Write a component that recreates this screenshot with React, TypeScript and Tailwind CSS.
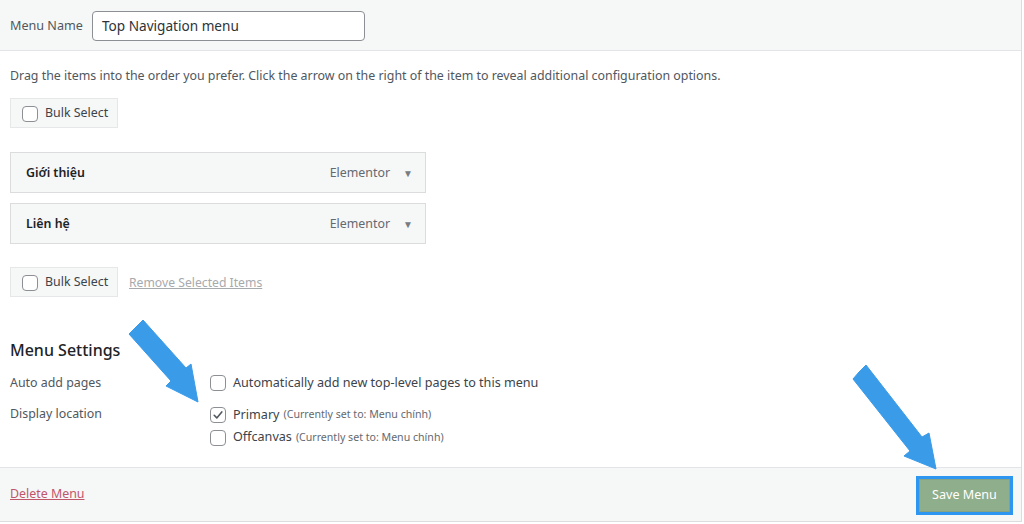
import React from "react";

const Checkbox = ({ checked = false }: { checked?: boolean }) => (
  <span className="flex h-4 w-4 shrink-0 items-center justify-center rounded-[4px] border border-[#8c8f94] bg-white">
    {checked && (
      <svg width="12" height="12" viewBox="0 0 12 12" fill="none">
        <path d="M2.2 6.3 L4.8 8.9 L9.8 2.9" stroke="#50575e" strokeWidth="1.6" strokeLinecap="round" strokeLinejoin="round" />
      </svg>
    )}
  </span>
);

const BulkSelect = () => (
  <div className="flex h-[30px] w-[108px] items-center gap-[7px] border border-[#e6e7e8] bg-[#f6f7f7] pl-[11px] pt-[2px] text-[12.4px] text-[#3c434a]">
    <Checkbox />
    <span>Bulk Select</span>
  </div>
);

const MenuItem = ({ title }: { title: string }) => (
  <div className="flex h-[41px] w-[416px] items-center border border-[#dcdcde] bg-[#f6f7f7] pl-[15px] pr-[12px] pt-[2px] text-[12.4px]">
    <span className="font-semibold text-[#1d2327]">{title}</span>
    <span className="ml-auto text-[#646970]">Elementor</span>
    <span className="ml-[13px] text-[10px] text-[#787c82]">▼</span>
  </div>
);

const Arrow = ({ className, points }: { className: string; points: string }) => (
  <svg className={className} width="100%" height="100%" viewBox="0 0 1024 524">
    <polygon points={points} fill="#3a9be8" stroke="#3a9be8" strokeWidth="1" strokeLinejoin="round" />
  </svg>
);

export default function App() {
  return (
    <div
      className="relative h-[524px] w-[1024px] overflow-hidden bg-white"
      style={{ fontFamily: '"Noto Sans", "Open Sans", sans-serif' }}
    >
      <div className="flex h-[522px] w-[1022px] flex-col border-r border-b border-[#dcdcde]">
        <div className="flex h-[51px] items-center border-b border-[#e2e4e7] bg-[#f6f7f7] pl-[10px] pt-[1px]">
          <span className="w-[82px] pt-[2px] text-[12.6px] text-[#50575e]">Menu Name</span>
          <div className="flex h-[30px] w-[273px] items-center rounded-[4px] border border-[#8c8f94] bg-white px-[9px] pt-[1px] text-[13.6px] text-[#2c3338]">
            Top Navigation menu
          </div>
        </div>

        <div className="flex flex-1 flex-col px-[10px]">
          <p className="mt-[16px] text-[12.4px] text-[#50575e]">
            Drag the items into the order you prefer. Click the arrow on the right of the item to reveal additional configuration options.
          </p>
          <div className="mt-[12px]">
            <BulkSelect />
          </div>
          <div className="mt-[24px] flex flex-col gap-[10px]">
            <MenuItem title="Giới thiệu" />
            <MenuItem title="Liên hệ" />
          </div>
          <div className="mt-[23px] flex items-center gap-[11px]">
            <BulkSelect />
            <span className="pt-[3px] text-[12.2px] text-[#a7aaad] underline">Remove Selected Items</span>
          </div>

          <h3 className="mt-[41px] text-[16px] font-medium text-[#1d2327]">Menu Settings</h3>
          <div className="mt-[12px] flex items-center text-[12.4px] text-[#50575e]">
            <span className="w-[200px]">Auto add pages</span>
            <Checkbox />
            <span className="ml-[7px] text-[12.6px] text-[#3c434a]">Automatically add new top-level pages to this menu</span>
          </div>
          <div className="mt-[13px] flex text-[12.4px] text-[#50575e]">
            <span className="w-[200px] leading-[16px]">Display location</span>
            <div className="flex flex-col gap-[4px]">
              <div className="flex items-center">
                <Checkbox checked />
                <span className="ml-[7px] text-[12.6px] text-[#3c434a]">Primary</span>
                <span className="ml-[4px] text-[10.6px] text-[#646970]">(Currently set to: Menu chính)</span>
              </div>
              <div className="flex items-center">
                <Checkbox />
                <span className="ml-[7px] text-[12.6px] text-[#3c434a]">Offcanvas</span>
                <span className="ml-[4px] text-[10.6px] text-[#646970]">(Currently set to: Menu chính)</span>
              </div>
            </div>
          </div>
        </div>

        <div className="flex h-[54px] items-center border-t border-[#e2e4e7] bg-[#f6f7f7] pl-[10px] pr-[8px]">
          <span className="text-[12.4px] text-[#c0566a] underline">Delete Menu</span>
          <div className="ml-auto mt-[2px] border-[3px] border-[#2d96f0]">
            <div className="flex h-[33px] w-[91px] items-center justify-center border border-[#86a282] bg-[#8fae8b] text-[12.6px] text-white">
              Save Menu
            </div>
          </div>
        </div>
      </div>

      <Arrow
        className="pointer-events-none absolute inset-0"
        points="136,327 143,320 186,368 191,364 198,402 166,386 171,381 129,334"
      />
      <Arrow
        className="pointer-events-none absolute inset-0"
        points="859,372 866,365 922,437 929,433 936,469 904,456 910,451 853,379"
      />
    </div>
  );
}
